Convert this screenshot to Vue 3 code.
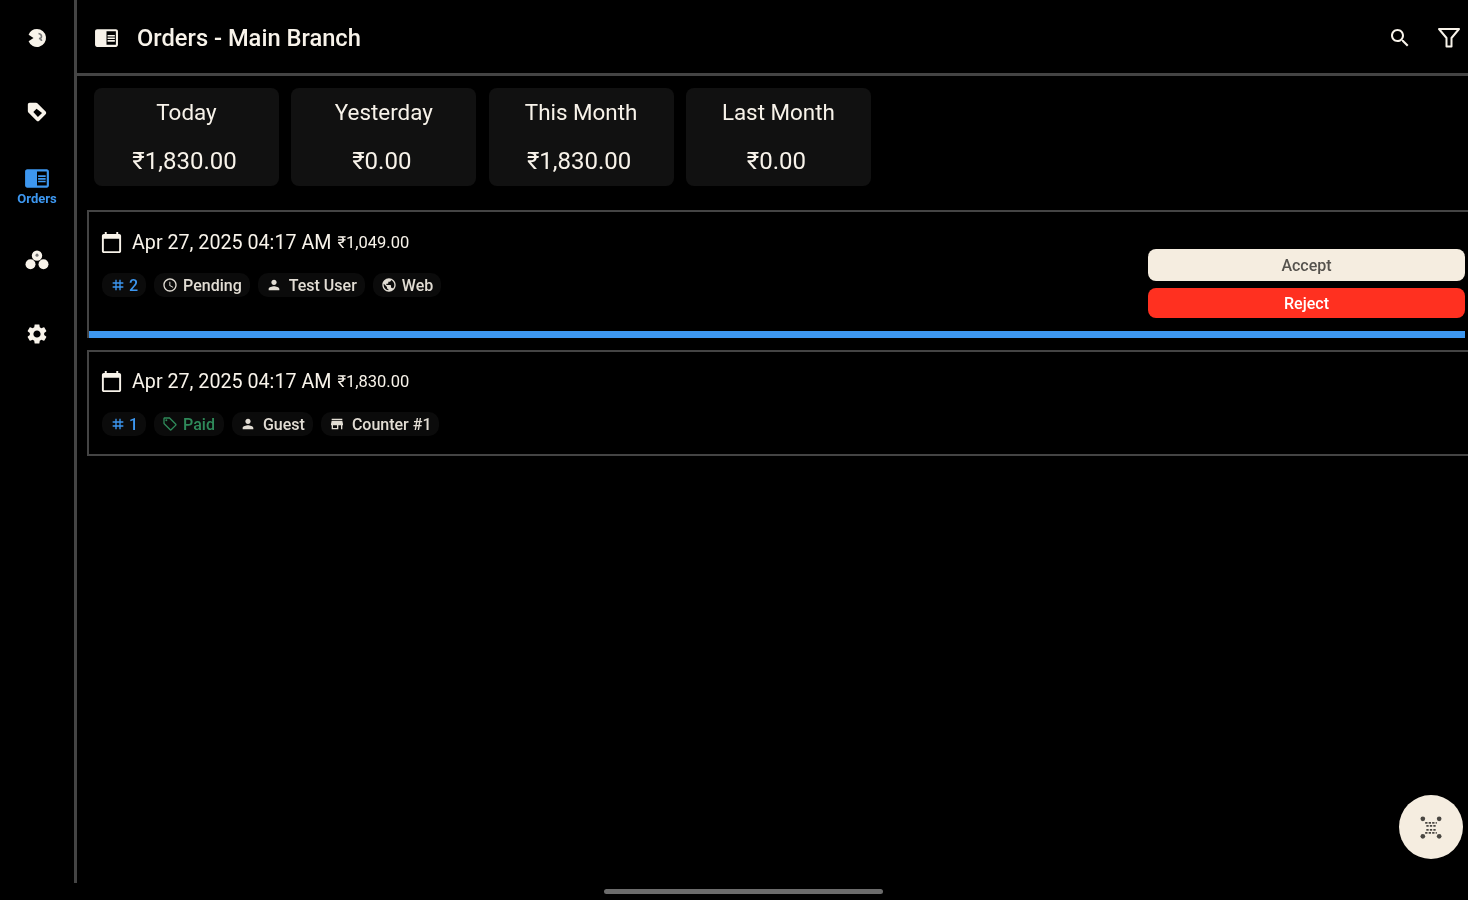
<script setup>
const icons = {
  tag: 'M21.41 11.58l-9-9C12.05 2.22 11.55 2 11 2H4c-1.1 0-2 .9-2 2v7c0 .55.22 1.05.59 1.42l9 9c.36.36.86.58 1.41.58.55 0 1.05-.22 1.41-.59l7-7c.37-.36.59-.86.59-1.41 0-.55-.23-1.06-.59-1.42zM11.500 8.500l6 4.500-4.500 4.500-5-5.500z',
  orders: 'M13 12h7v1.5h-7zm0-2.5h7V11h-7zm0 5h7V16h-7zM21 4H3c-1.1 0-2 .9-2 2v13c0 1.1.9 2 2 2h18c1.1 0 2-.9 2-2V6c0-1.1-.9-2-2-2zm0 15h-9V6h9v13z',
  gear: 'M19.14 12.94c.04-.3.06-.61.06-.94 0-.32-.02-.64-.07-.94l2.03-1.58c.18-.14.23-.41.12-.61l-1.92-3.32c-.12-.22-.37-.29-.59-.22l-2.39.96c-.5-.38-1.03-.7-1.62-.94l-.36-2.54c-.04-.24-.24-.41-.48-.41h-3.84c-.24 0-.43.17-.47.41l-.36 2.54c-.59.24-1.13.57-1.62.94l-2.39-.96c-.22-.08-.47 0-.59.22L2.74 8.87c-.12.21-.08.47.12.61l2.03 1.58c-.05.3-.09.63-.09.94s.02.64.07.94l-2.03 1.58c-.18.14-.23.41-.12.61l1.92 3.32c.12.22.37.29.59.22l2.39-.96c.5.38 1.03.7 1.62.94l.36 2.54c.05.24.24.41.48.41h3.84c.24 0 .44-.17.47-.41l.36-2.54c.59-.24 1.13-.56 1.62-.94l2.39.96c.22.08.47 0 .59-.22l1.92-3.32c.12-.22.07-.47-.12-.61l-2.01-1.58zM12 15.6c-1.98 0-3.6-1.62-3.6-3.6s1.62-3.6 3.6-3.6 3.6 1.62 3.6 3.6-1.62 3.6-3.6 3.6z',
  search: 'M15.5 14h-.79l-.28-.27C15.41 12.59 16 11.11 16 9.5 16 5.91 13.09 3 9.5 3S3 5.91 3 9.5 5.91 16 9.5 16c1.61 0 3.09-.59 4.23-1.57l.27.28v.79l5 4.99L20.49 19l-4.99-5zm-6 0C7.01 14 5 11.99 5 9.5S7.01 5 9.5 5 14 7.01 14 9.5 11.99 14 9.5 14z',
  calendar: 'M20 3h-1V1h-2v2H7V1H5v2H4c-1.1 0-2 .9-2 2v16c0 1.1.9 2 2 2h16c1.1 0 2-.9 2-2V5c0-1.1-.9-2-2-2zm0 18H4V8h16v13z',
  hash: 'M20 10V8h-4V4h-2v4h-4V4H8v4H4v2h4v4H4v2h4v4h2v-4h4v4h2v-4h4v-2h-4v-4h4zm-6 4h-4v-4h4v4z',
  clock: 'M11.99 2C6.47 2 2 6.48 2 12s4.47 10 9.99 10C17.52 22 22 17.52 22 12S17.52 2 11.99 2zM12 20c-4.42 0-8-3.58-8-8s3.58-8 8-8 8 3.58 8 8-3.58 8-8 8zm.5-13H11v6l5.25 3.15.75-1.23-4.5-2.67z',
  person: 'M12 12c2.21 0 4-1.79 4-4s-1.79-4-4-4-4 1.79-4 4 1.79 4 4 4zm0 2c-2.67 0-8 1.34-8 4v2h16v-2c0-2.66-5.33-4-8-4z',
  globe: 'M12 2C6.48 2 2 6.48 2 12s4.48 10 10 10 10-4.48 10-10S17.52 2 12 2zm-1 17.93c-3.95-.49-7-3.85-7-7.93 0-.62.08-1.21.21-1.79L9 15v1c0 1.1.9 2 2 2v1.93zm6.9-2.54c-.26-.81-1-1.39-1.9-1.39h-1v-3c0-.55-.45-1-1-1H8v-2h2c.55 0 1-.45 1-1V7h2c1.1 0 2-.9 2-2v-.41c2.93 1.19 5 4.06 5 7.41 0 2.08-.8 3.97-2.1 5.39z',
  paid: 'M21.41 11.58l-9-9C12.05 2.22 11.55 2 11 2H4c-1.1 0-2 .9-2 2v7c0 .55.22 1.05.59 1.42l9 9c.36.36.86.58 1.41.58s1.05-.22 1.41-.59l7-7c.37-.36.59-.86.59-1.41s-.23-1.06-.59-1.42zM13 20.01L4 11V4h7v-.01l9 9-7 7.02zM6.5 5A1.5 1.5 0 1 0 6.5 8 1.5 1.5 0 0 0 6.5 5z',
  store: 'M20 4H4v2h16V4zm1 10v-2l-1-5H4l-1 5v2h1v6h10v-6h4v6h2v-6h1zm-9 4H6v-4h6v4z',
  food: 'M12 3a9 9 0 1 1-8.400 12.200L8.500 12 3.600 8.800A9 9 0 0 1 12 3z',
}
const stats = [
  { label: 'Today', value: '₹1,830.00' },
  { label: 'Yesterday', value: '₹0.00' },
  { label: 'This Month', value: '₹1,830.00' },
  { label: 'Last Month', value: '₹0.00' },
]
const orders = [
  {
    id: 2, price: '₹1,049.00', actionable: true,
    chips: [
      { icon: 'clock', text: 'Pending' },
      { icon: 'person', text: 'Test User' },
      { icon: 'globe', text: 'Web' },
    ],
  },
  {
    id: 1, price: '₹1,830.00', actionable: false,
    chips: [
      { icon: 'paid', text: 'Paid', green: true },
      { icon: 'person', text: 'Guest' },
      { icon: 'store', text: 'Counter #1' },
    ],
  },
]
</script>

<template>
  <div class="app">
    <nav class="rail">
      <div class="rail-item">
        <svg class="i24" viewBox="0 0 24 24">
          <path :d="icons.food" />
          <path class="food-line" d="M13.500 7.500c2 .2 3 1.500 3 3s-1 2-2.500 2c1.500.3 2.500 1.200 2.500 2.500" />
        </svg>
      </div>
      <div class="rail-item"><svg class="i22" viewBox="0 0 24 24"><path fill-rule="evenodd" :d="icons.tag" /></svg></div>
      <div class="rail-item active">
        <svg class="i26 lift" viewBox="0 0 24 24"><path :d="icons.orders" /></svg>
        <span class="rail-label">Orders</span>
      </div>
      <div class="rail-item">
        <svg class="i26" viewBox="0 0 24 24">
          <circle cx="12" cy="8" r="4.800" /><circle cx="6" cy="16" r="4.600" /><circle cx="18" cy="16" r="4.600" />
          <circle class="hole" cx="12" cy="7.500" r="1.400" />
        </svg>
      </div>
      <div class="rail-item"><svg class="i24" viewBox="0 0 24 24"><path :d="icons.gear" /></svg></div>
    </nav>

    <main class="main">
      <header class="top">
        <svg class="i25" viewBox="0 0 24 24"><path :d="icons.orders" /></svg>
        <h1 class="title">Orders - Main Branch</h1>
        <div class="top-actions">
          <svg class="i24" viewBox="0 0 24 24"><path :d="icons.search" /></svg>
          <svg class="i24 funnel" viewBox="0 0 24 24"><path d="M2 3h20l-7.500 9v8.500h-5V12z" /></svg>
        </div>
      </header>

      <section class="stats">
        <div v-for="s in stats" :key="s.label" class="stat">
          <div class="stat-label">{{ s.label }}</div>
          <div class="stat-value">{{ s.value }}</div>
        </div>
      </section>

      <section class="orders">
        <article v-for="o in orders" :key="o.id" class="order" :class="{ live: o.actionable }">
          <div class="order-row">
            <div class="order-info">
              <div class="when">
                <svg class="i23" viewBox="0 0 24 24"><path :d="icons.calendar" /></svg>
                <span class="date">Apr 27, 2025 04:17 AM</span>
                <span class="price">{{ o.price }}</span>
              </div>
              <div class="chips">
                <span class="chip num">
                  <svg class="i16" viewBox="0 0 24 24"><path :d="icons.hash" /></svg>{{ o.id }}
                </span>
                <span v-for="c in o.chips" :key="c.text" class="chip" :class="[c.icon, { green: c.green }]">
                  <svg class="i16" viewBox="0 0 24 24"><path :d="icons[c.icon]" /></svg>{{ c.text }}
                </span>
              </div>
            </div>
            <div v-if="o.actionable" class="actions">
              <button class="btn accept">Accept</button>
              <button class="btn reject">Reject</button>
            </div>
          </div>
          <div v-if="o.actionable" class="progress"></div>
        </article>
      </section>
    </main>

    <button class="fab" aria-label="Scan">
      <svg class="i28" viewBox="0 0 24 24">
        <circle cx="5" cy="5" r="2" /><circle cx="19" cy="5" r="2" />
        <circle cx="5" cy="20" r="2" /><circle cx="19" cy="20" r="2" />
        <path class="fab-lines" d="M7 8.500h10M8 11h8M8 14.500h8M7 17h10" />
      </svg>
    </button>
    <div class="home"></div>
  </div>
</template>

<style>
html, body { margin: 0; background: #000; }
</style>

<style scoped>
.app {
  position: relative;
  display: flex;
  align-items: flex-start;
  width: 1468px;
  height: 900px;
  overflow: hidden;
  background: #000;
  color: #f8f3ea;
  font-family: Roboto, "Liberation Sans", sans-serif;
  filter: blur(0.5px);
}
svg { fill: currentColor; display: block; flex: none; }
.i16 { width: 16px; height: 16px; }
.i22 { width: 22px; height: 22px; }
.i23 { width: 23px; height: 23px; }
.i24 { width: 24px; height: 24px; }
.i25 { width: 25px; height: 25px; }
.i26 { width: 26px; height: 26px; }
.i28 { width: 28px; height: 28px; }
.lift { margin-top: -2px; }
.funnel path { fill: none; stroke: currentColor; stroke-width: 2; stroke-linejoin: round; }

.rail {
  flex: none;
  box-sizing: border-box;
  width: 77px;
  height: 883px;
  padding-top: 1px;
  border-right: 3px solid #444;
}
.rail-item {
  height: 74px;
  display: flex;
  flex-direction: column;
  align-items: center;
  justify-content: center;
}
.rail-item.active { color: #3d97f0; }
.rail-label { font-size: 13px; font-weight: 700; line-height: 15px; margin-top: 0; }
.food-line { fill: none; stroke: #777; stroke-width: 1.600; }
.hole { fill: #777; }

.main { flex: 1; min-width: 0; height: 883px; }
.top {
  box-sizing: border-box;
  height: 76px;
  display: flex;
  align-items: center;
  padding: 2px 7px 0 17px;
  border-bottom: 3px solid #444;
}
.title { margin: 0 0 0 18px; font-size: 23.700px; font-weight: 500; }
.top-actions { margin-left: auto; display: flex; align-items: center; gap: 25px; }

.stats { display: flex; gap: 12.300px; margin: 12px 0 0 17px; }
.stat {
  box-sizing: border-box;
  width: 185px;
  height: 98px;
  padding: 8px 0 9px;
  display: flex;
  flex-direction: column;
  justify-content: space-between;
  align-items: center;
  background: #111;
  border-radius: 8px;
  line-height: 32px;
}
.stat-label { font-size: 22.400px; }
.stat-value { font-size: 24px; padding-right: 4px; }

.orders { margin: 24px -5px 0 10px; display: flex; flex-direction: column; gap: 12px; }
.order { border: 2px solid #444; }
.order.live { border-bottom: 0; }
.order-row { display: flex; justify-content: space-between; align-items: flex-end; height: 102px; padding-left: 11px; }
.order.live .order-row { height: 119px; padding-right: 3px; }
.order-info { align-self: flex-start; padding-top: 17px; }
.order.live .order-info { padding-top: 18px; }
.when { display: flex; align-items: center; height: 24px; }
.date { margin-left: 9px; font-size: 19.700px; }
.price { margin-left: 6px; font-size: 16.500px; }
.chips { display: flex; gap: 8px; margin: 19px 0 0 2px; }
.chip {
  box-sizing: border-box;
  height: 24px;
  padding: 0 8px;
  display: inline-flex;
  align-items: center;
  gap: 5px;
  background: #0b0b0b;
  border-radius: 10px;
  font-size: 16px;
  font-weight: 500;
  color: #e2ddd4;
}
.chip.num { color: #3d97f0; gap: 3px; }
.chip.green { color: #2f8a5a; padding-right: 9px; }
.chip.person, .chip.store { gap: 7px; }
.actions { width: 317px; display: flex; flex-direction: column; gap: 7px; padding-bottom: 13px; margin-right: 3px; }
.btn {
  border: 0;
  border-radius: 8px;
  font: 500 16px Roboto, "Liberation Sans", sans-serif;
  padding: 0;
}
.accept { height: 32px; background: #f5ede0; color: #55524d; }
.reject { height: 30px; background: #ff3020; color: #fff; }
.progress { height: 7px; margin-right: 6px; background: #3d97f0; }

.fab {
  position: absolute;
  left: 1399px;
  top: 795px;
  width: 64px;
  height: 64px;
  padding: 18px;
  border: 0;
  border-radius: 50%;
  background: #f5ede0;
  color: #4a4742;
}
.fab-lines { fill: none; stroke: currentColor; stroke-width: 1.400; stroke-dasharray: 2 1; }
.home {
  position: absolute;
  left: 604px;
  top: 889px;
  width: 279px;
  height: 5px;
  border-radius: 3px;
  background: #6b6b6b;
}
</style>
